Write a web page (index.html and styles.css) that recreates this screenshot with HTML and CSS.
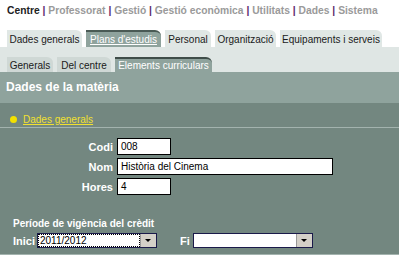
FILE: index.html
```html
<!DOCTYPE html>
<html lang="ca">
<head>
  <meta charset="UTF-8">
  <title>Dades de la matèria</title>
  <link rel="stylesheet" href="styles.css">
</head>
<body>
  <div class="topnav">
    <span class="current">Centre</span> <span class="sep">|</span>
    <a href="#">Professorat</a> <span class="sep">|</span>
    <a href="#">Gestió</a> <span class="sep">|</span>
    <a href="#">Gestió econòmica</a> <span class="sep">|</span>
    <a href="#">Utilitats</a> <span class="sep">|</span>
    <a href="#">Dades</a> <span class="sep">|</span>
    <a href="#">Sistema</a>
  </div>

  <div class="tabs main-tabs">
    <span class="tab w75">Dades generals</span>
    <span class="tab w75 active"><u>Plans d'estudis</u></span>
    <span class="tab w46">Personal</span>
    <span class="tab w61">Organització</span>
    <span class="tab w102">Equipaments i serveis</span>
  </div>

  <div class="subband">
    <div class="tabs sub-tabs">
      <span class="tab w46">Generals</span>
      <span class="tab w54">Del centre</span>
      <span class="tab w97 active">Elements curriculars</span>
    </div>
  </div>

  <div class="panel">
    <h2 class="panel-title">Dades de la matèria</h2>
    <div class="section">
      <span class="dot"></span><a href="#" class="section-link">Dades generals</a>
    </div>

    <div class="form">
      <div class="row">
        <label>Codi</label>
        <span class="field short">008</span>
      </div>
      <div class="row">
        <label>Nom</label>
        <span class="field long">Història del Cinema</span>
      </div>
      <div class="row">
        <label>Hores</label>
        <span class="field short">4</span>
      </div>
    </div>

    <div class="period">
      <div class="period-title">Període de vigència del crèdit</div>
      <div class="period-row">
        <label>Inici</label>
        <div class="combo"><span class="combo-value"><span class="selected">2011/2012</span></span><span class="combo-btn"></span></div>
        <label class="fi">Fi</label>
        <div class="combo"><span class="combo-value"></span><span class="combo-btn"></span></div>
      </div>
    </div>
  </div>
</body>
</html>
```

FILE: styles.css
```css
body {
  margin: 0;
  background: #fff;
  font-family: "Liberation Sans", Arial, sans-serif;
  font-size: 10px;
  color: #000;
}

.topnav {
  box-sizing: border-box;
  height: 30px;
  padding: 5px 0 0 7px;
  font-weight: bold;
  font-size: 10.3px;
  white-space: nowrap;
  color: #9a9a9a;
}
.topnav .current {
  color: #222;
}
.topnav a {
  color: #9a9a9a;
  text-decoration: none;
}
.topnav .sep {
  color: #5c2a6c;
}

.tabs {
  display: flex;
  gap: 4px;
  padding-left: 7px;
  white-space: nowrap;
}
.tab {
  display: block;
  box-sizing: border-box;
  text-align: center;
  background: #e0e7e5;
  color: #1a1a1a;
  border-top-right-radius: 6px;
  border-top: 2px solid #e0e7e5;
}
.w46 { width: 46px; }
.w54 { width: 54px; }
.w61 { width: 61px; }
.w75 { width: 75px; }
.w97 { width: 97px; }
.w102 { width: 102px; }

.main-tabs .tab {
  height: 17px;
  line-height: 15px;
}
.main-tabs .tab.active {
  background: #8fa39d;
  border-top-color: #4a5a55;
  color: #fff;
}
.main-tabs .tab.active u {
  text-decoration-color: #fff;
}

.subband {
  background: #dfe6e4;
  padding-top: 10px;
}
.sub-tabs .tab {
  background: #cfd8d5;
  border-top-color: #cfd8d5;
  height: 15px;
  line-height: 13px;
}
.sub-tabs .tab.active {
  background: #8fa39d;
  border-top-color: #3f4d49;
  color: #fff;
}

.panel {
  background: #738780;
  padding-bottom: 6px;
  border-bottom: 1px solid #a3b3ae;
}
.panel-title {
  margin: 0;
  background: #8fa39d;
  color: #fff;
  font-size: 12px;
  font-weight: bold;
  height: 31px;
  line-height: 30px;
  padding-left: 6px;
}
.section {
  display: flex;
  align-items: center;
  gap: 6px;
  padding: 8px 0 0 10px;
  height: 16px;
  border-bottom: 1px solid #a3b3ae;
}
.dot {
  width: 7px;
  height: 7px;
  border-radius: 50%;
  background: #f2e000;
}
.section-link {
  color: #f0e030;
}

.form {
  padding-top: 10px;
  display: flex;
  flex-direction: column;
  gap: 3px;
}
.row {
  display: flex;
  align-items: center;
  gap: 4px;
}
.row label {
  width: 113px;
  text-align: right;
  color: #fff;
  font-weight: bold;
  font-size: 11px;
}
.field {
  display: block;
  box-sizing: border-box;
  height: 17px;
  line-height: 15px;
  background: #fff;
  border: 1px solid #000;
  padding-left: 3px;
}
.field.short {
  width: 54px;
}
.field.long {
  width: 216px;
}

.period {
  padding: 23px 0 0 13px;
  color: #fff;
  font-weight: bold;
  font-size: 10px;
}
.period-title {
  height: 12px;
  line-height: 12px;
}
.period-row {
  display: flex;
  align-items: center;
  margin-top: 3px;
}
.period-row label {
  width: 24px;
  font-size: 11px;
}
.period-row .fi {
  width: 13px;
  margin-left: 23px;
}
.combo {
  display: flex;
  box-sizing: border-box;
  width: 120px;
  height: 15px;
  background: #fff;
  border: 1px solid #1a1a4a;
  font-weight: normal;
  color: #000;
}
.combo-value {
  flex: 1;
  padding: 1px 1px;
}
.selected {
  display: block;
  height: 11px;
  line-height: 11px;
  outline: 1px dotted #000;
  padding-left: 1px;
  width: 99px;
}
.combo-btn {
  width: 15px;
  background: #d4d0c8;
  border-left: 1px solid #999;
  position: relative;
}
.combo-btn::after {
  content: "";
  position: absolute;
  left: 4px;
  top: 5px;
  border-left: 3px solid transparent;
  border-right: 3px solid transparent;
  border-top: 3px solid #000;
}
```
